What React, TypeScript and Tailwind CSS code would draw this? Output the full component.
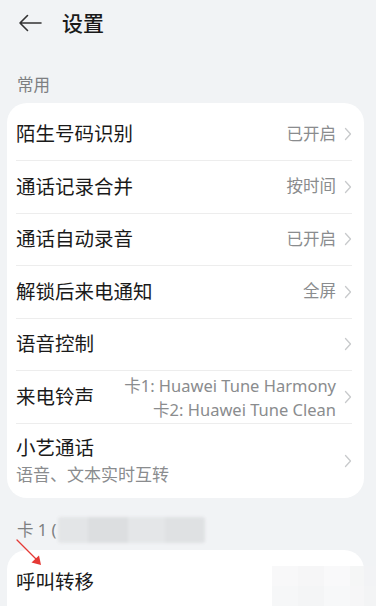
import { type ReactNode } from 'react';

const FONT = '"Noto Sans", "Noto Sans CJK SC", sans-serif';

function Chevron() {
  return (
    <svg width="8" height="14" viewBox="0 0 8 14" className="shrink-0 ml-[8px]">
      <polyline points="1.5,1.5 6.5,7 1.5,12.5" fill="none" stroke="#c8cacc" strokeWidth="1.3" strokeLinecap="round" strokeLinejoin="round" />
    </svg>
  );
}

interface Row {
  title: string;
  sub?: string;
  value?: ReactNode;
}

const rows: Row[] = [
  { title: '陌生号码识别', value: '已开启' },
  { title: '通话记录合并', value: '按时间' },
  { title: '通话自动录音', value: '已开启' },
  { title: '解锁后来电通知', value: '全屏' },
  { title: '语音控制' },
  {
    title: '来电铃声',
    value: (
      <div className="flex flex-col items-end leading-[24px] text-[16.5px] pt-[2px]">
        <span>卡1: Huawei Tune Harmony</span>
        <span>卡2: Huawei Tune Clean</span>
      </div>
    ),
  },
  { title: '小艺通话', sub: '语音、文本实时互转' },
];

export default function App() {
  return (
    <div className="relative w-[376px] h-[606px] overflow-hidden bg-[#f1f3f5] text-[#1a1a1a]" style={{ fontFamily: FONT }}>
      {/* header */}
      <div className="h-[46px] flex items-center pl-[18px]">
        <svg width="24" height="18" viewBox="0 0 24 18">
          <path d="M23 9H2M9.5 1.5L2 9l7.5 7.5" fill="none" stroke="#333" strokeWidth="1.6" strokeLinecap="round" strokeLinejoin="round" />
        </svg>
        <span className="ml-[20px] text-[21px] font-medium leading-none">设置</span>
      </div>

      <div className="h-[57px] flex items-end pb-[6px] pl-[17px] text-[16.5px] leading-[24px] text-[#7d7f81]">常用</div>

      <div className="ml-[7px] w-[357px] rounded-[20px] bg-white pt-[5.5px] pl-[9px] pr-[12px] pb-[11px]">
        {rows.map((r, i) => {
          const last = i === rows.length - 1;
          return (
            <div
              key={r.title}
              className={
                last
                  ? 'flex items-center pt-[11.5px]'
                  : 'h-[52.5px] flex items-center border-b border-[#ededed]'
              }
            >
              <div className="flex-1 min-w-0 flex flex-col">
                <span className="text-[19.5px] leading-[26px] whitespace-nowrap">{r.title}</span>
                {r.sub && <span className="text-[17px] leading-[24px] mt-[2px] text-[#8a8c8e]">{r.sub}</span>}
              </div>
              {r.value && (
                <div className="text-[16.5px] text-[#8a8c8e] whitespace-nowrap">{r.value}</div>
              )}
              <Chevron />
            </div>
          );
        })}
      </div>

      <div className="h-[52px] flex items-end pb-[8px] pl-[17px] text-[16.5px] leading-[24px] text-[#7d7f81]">
        <span>卡 1 (</span>
        <span className="ml-[2px] mb-[-1px] inline-flex h-[26px] w-[147px] overflow-hidden rounded-[3px] blur-[1.5px]">
          <span className="w-[30px] bg-[#e3e5e7]" />
          <span className="w-[40px] bg-[#dcdee0]" />
          <span className="w-[37px] bg-[#e4e6e8]" />
          <span className="w-[40px] bg-[#dfe1e3]" />
        </span>
      </div>

      <div className="relative ml-[7px] w-[357px] h-[60px] rounded-t-[20px] bg-white pt-[5.5px] pl-[9px]">
        <div className="h-[52.5px] flex items-center text-[19.5px] leading-[26px]">呼叫转移</div>
        <div className="absolute right-[-12px] top-[16px] grid grid-cols-4 gap-0 opacity-80">
          <span className="w-[26px] h-[20px] bg-[#f7f7f8]" />
          <span className="w-[26px] h-[20px] bg-[#f4f5f6]" />
          <span className="w-[26px] h-[20px] bg-[#f8f8f9]" />
          <span className="w-[26px] h-[20px] bg-[#f3f4f5]" />
          <span className="w-[26px] h-[20px] bg-[#f5f6f7]" />
          <span className="w-[26px] h-[20px] bg-[#f2f3f4]" />
          <span className="w-[26px] h-[20px] bg-[#f6f7f8]" />
          <span className="w-[26px] h-[20px] bg-[#f4f5f6]" />
        </div>
      </div>

      {/* red annotation arrow */}
      <svg className="absolute left-[15px] top-[538px]" width="30" height="30" viewBox="0 0 30 30">
        <path d="M2 2L24 24" stroke="#e53935" strokeWidth="1.3" strokeLinecap="round" />
        <path d="M26 27L16.5 24.5L24 17.5Z" fill="#e53935" />
      </svg>
    </div>
  );
}
